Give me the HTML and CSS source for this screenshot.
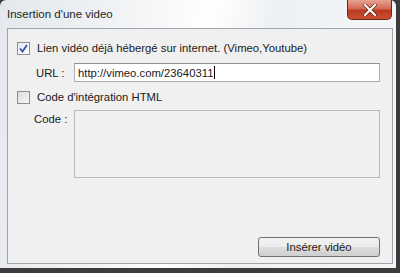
FILE: index.html
```html
<!DOCTYPE html>
<html lang="fr">
<head>
  <meta charset="UTF-8" />
  <title>Insertion d'une video</title>
  <link rel="stylesheet" href="styles.css">
</head>
<body>
  <div class="window">
    <div class="title-bar">
      <span class="title">Insertion d'une video</span>
      <div class="close-btn">
        <svg width="14" height="12" viewBox="0 0 14 12">
          <path d="M2 1 L12 11 M12 1 L2 11" stroke="#5a1a10" stroke-width="3.4" stroke-linecap="round"/>
          <path d="M2 1 L12 11 M12 1 L2 11" stroke="#fff" stroke-width="2.2" stroke-linecap="round"/>
        </svg>
      </div>
    </div>

    <div class="client">
      <div class="row check-row">
        <span class="checkbox checked">
          <svg width="9" height="9" viewBox="0 0 9 9">
            <path d="M1 4.5 L3.5 7.5 L8 1" fill="none" stroke="#3a4fa8" stroke-width="1.8"/>
          </svg>
        </span>
        <span class="label">Lien vidéo déjà hébergé sur internet. (Vimeo,Youtube)</span>
      </div>

      <div class="row field-row">
        <span class="field-label">URL :</span>
        <div class="input">http://vimeo.com/23640311<span class="caret"></span></div>
      </div>

      <div class="row check-row">
        <span class="checkbox"></span>
        <span class="label">Code d'intégration HTML</span>
      </div>

      <div class="row code-row">
        <span class="field-label">Code :</span>
        <div class="textarea"></div>
      </div>

      <div class="footer">
        <button class="btn">Insérer vidéo</button>
      </div>
    </div>
  </div>
</body>
</html>
```

FILE: styles.css
```css
body {
  margin: 0;
  background: #3c3c3c;
  font-family: 'Liberation Sans', Arial, sans-serif;
  font-size: 11.3px;
  color: #1a1a1a;
}

.window {
  width: 396px;
  height: 268px;
  background: linear-gradient(100deg, #e4e8ec 0%, #f2f4f6 30%, #ffffff 48%, #eef1f4 62%, #f5f6f8 100%);
  border-radius: 6px 6px 0 0;
  display: flex;
  flex-direction: column;
  box-sizing: border-box;
  padding: 0 3px 4px 7px;
}

.title-bar {
  height: 28px;
  display: flex;
  justify-content: space-between;
  align-items: flex-start;
}

.title {
  margin-top: 8px;
  font-size: 11.5px;
  color: #1e1e1e;
}

.close-btn {
  width: 45px;
  height: 20px;
  box-sizing: border-box;
  border: 1px solid #6b2418;
  border-top: none;
  border-radius: 0 0 5px 5px;
  background: linear-gradient(#e8a293 0%, #d26a55 45%, #b93a22 55%, #c9502f 100%);
  display: flex;
  align-items: center;
  justify-content: center;
  margin-right: 1px;
}

.client {
  flex: 1;
  background: #f0f0f0;
  border: 1px solid #9ea4ab;
  display: flex;
  flex-direction: column;
  padding: 11px 12px 6px 9px;
}

.row {
  display: flex;
  align-items: center;
}

.check-row {
  height: 16px;
}

.checkbox {
  width: 11px;
  height: 11px;
  border: 1px solid #8e8f8f;
  background: linear-gradient(135deg, #dcdcdc, #f8f8f8);
  display: flex;
  align-items: center;
  justify-content: center;
  margin-right: 7px;
  flex-shrink: 0;
}

.checkbox.checked {
  background: linear-gradient(135deg, #e6eaf6, #fbfbfd);
}

.field-label {
  width: 38px;
  padding-left: 19px;
  flex-shrink: 0;
}

.field-row {
  margin-top: 7px;
  margin-bottom: 7px;
}

.input {
  flex: 1;
  height: 19px;
  box-sizing: border-box;
  border: 1px solid #abadb3;
  border-top-color: #8a8f98;
  background: #fff;
  padding: 2px 3px;
  display: flex;
  align-items: center;
}

.caret {
  width: 1px;
  height: 13px;
  background: #000;
  margin-left: 1px;
}

.code-row {
  margin-top: 5px;
  align-items: flex-start;
}

.code-row .field-label {
  margin-top: 3px;
  padding-left: 17px;
  width: 40px;
}

.textarea {
  flex: 1;
  height: 66px;
  border: 1px solid #b5b9be;
  background: #f0f0f0;
}

.footer {
  margin-top: auto;
  display: flex;
  justify-content: flex-end;
}

.btn {
  width: 122px;
  height: 20px;
  border: 1px solid #707070;
  border-radius: 3px;
  background: linear-gradient(#f2f2f2 0%, #ebebeb 50%, #dddddd 51%, #cfcfcf 100%);
  font-family: 'Liberation Sans', Arial, sans-serif;
  font-size: 11.3px;
  color: #1a1a1a;
  padding: 0;
}
```
